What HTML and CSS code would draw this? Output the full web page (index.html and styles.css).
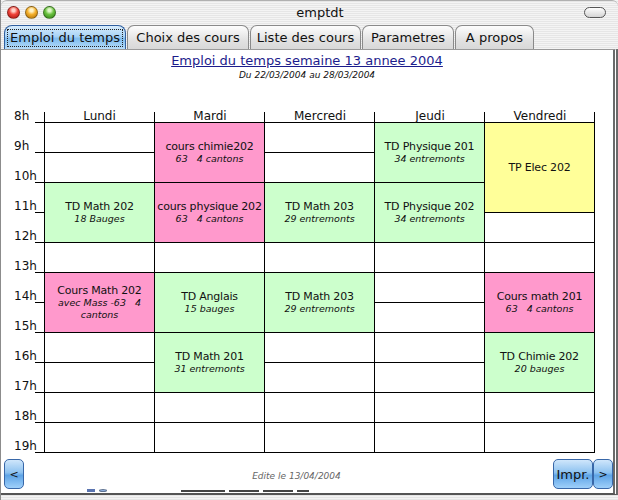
FILE: index.html
```html
<!DOCTYPE html>
<html lang="fr">
<head>
<meta charset="utf-8">
<title>emptdt</title>
<link rel="stylesheet" href="styles.css">
</head>
<body>
<div class="window">
  <div class="titlebar">
    <div class="lights">
      <span class="light red"></span>
      <span class="light yellow"></span>
      <span class="light green"></span>
    </div>
    <div class="wintitle">emptdt</div>
    <span class="pill"></span>
  </div>
  <div class="tabs">
    <div class="tab active t1"><span class="focus">Emploi du temps</span></div>
    <div class="tab t2">Choix des cours</div>
    <div class="tab t3">Liste des cours</div>
    <div class="tab t4">Parametres</div>
    <div class="tab t5">A propos</div>
  </div>
  <div class="panel">
    <div class="heading">
      <a class="title" href="#">Emploi du temps semaine 13 annee 2004</a>
      <div class="subtitle">Du 22/03/2004 au 28/03/2004</div>
    </div>
    <div class="schedule">
      <!-- header row -->
      <div class="hour" style="grid-row:1">8h</div>
      <div class="day first" style="grid-column:2">Lundi</div>
      <div class="day" style="grid-column:3">Mardi</div>
      <div class="day" style="grid-column:4">Mercredi</div>
      <div class="day" style="grid-column:5">Jeudi</div>
      <div class="day" style="grid-column:6">Vendredi</div>

      <!-- hour labels -->
      <div class="hour" style="grid-row:2">9h</div>
      <div class="hour" style="grid-row:3">10h</div>
      <div class="hour" style="grid-row:4">11h</div>
      <div class="hour" style="grid-row:5">12h</div>
      <div class="hour" style="grid-row:6">13h</div>
      <div class="hour" style="grid-row:7">14h</div>
      <div class="hour" style="grid-row:8">15h</div>
      <div class="hour" style="grid-row:9">16h</div>
      <div class="hour" style="grid-row:10">17h</div>
      <div class="hour" style="grid-row:11">18h</div>
      <div class="hour" style="grid-row:12">19h</div>

      <!-- Lundi -->
      <div class="cell first" style="grid-column:2;grid-row:2"></div>
      <div class="cell first" style="grid-column:2;grid-row:3"></div>
      <div class="cell first green" style="grid-column:2;grid-row:4 / span 2"><b>TD Math 202</b><i>18 Bauges</i></div>
      <div class="cell first" style="grid-column:2;grid-row:6"></div>
      <div class="cell first pink" style="grid-column:2;grid-row:7 / span 2"><b>Cours Math 202</b><i>avec Mass -63   4 cantons</i></div>
      <div class="cell first" style="grid-column:2;grid-row:9"></div>
      <div class="cell first" style="grid-column:2;grid-row:10"></div>
      <div class="cell first" style="grid-column:2;grid-row:11"></div>
      <div class="cell first" style="grid-column:2;grid-row:12"></div>

      <!-- Mardi -->
      <div class="cell pink" style="grid-column:3;grid-row:2 / span 2"><b>cours chimie202</b><i>63   4 cantons</i></div>
      <div class="cell pink" style="grid-column:3;grid-row:4 / span 2"><b>cours physique 202</b><i>63   4 cantons</i></div>
      <div class="cell" style="grid-column:3;grid-row:6"></div>
      <div class="cell green" style="grid-column:3;grid-row:7 / span 2"><b>TD Anglais</b><i>15 bauges</i></div>
      <div class="cell green" style="grid-column:3;grid-row:9 / span 2"><b>TD Math 201</b><i>31 entremonts</i></div>
      <div class="cell" style="grid-column:3;grid-row:11"></div>
      <div class="cell" style="grid-column:3;grid-row:12"></div>

      <!-- Mercredi -->
      <div class="cell" style="grid-column:4;grid-row:2"></div>
      <div class="cell" style="grid-column:4;grid-row:3"></div>
      <div class="cell green" style="grid-column:4;grid-row:4 / span 2"><b>TD Math 203</b><i>29 entremonts</i></div>
      <div class="cell" style="grid-column:4;grid-row:6"></div>
      <div class="cell green" style="grid-column:4;grid-row:7 / span 2"><b>TD Math 203</b><i>29 entremonts</i></div>
      <div class="cell" style="grid-column:4;grid-row:9"></div>
      <div class="cell" style="grid-column:4;grid-row:10"></div>
      <div class="cell" style="grid-column:4;grid-row:11"></div>
      <div class="cell" style="grid-column:4;grid-row:12"></div>

      <!-- Jeudi -->
      <div class="cell green" style="grid-column:5;grid-row:2 / span 2"><b>TD Physique 201</b><i>34 entremonts</i></div>
      <div class="cell green" style="grid-column:5;grid-row:4 / span 2"><b>TD Physique 202</b><i>34 entremonts</i></div>
      <div class="cell" style="grid-column:5;grid-row:6"></div>
      <div class="cell" style="grid-column:5;grid-row:7"></div>
      <div class="cell" style="grid-column:5;grid-row:8"></div>
      <div class="cell" style="grid-column:5;grid-row:9"></div>
      <div class="cell" style="grid-column:5;grid-row:10"></div>
      <div class="cell" style="grid-column:5;grid-row:11"></div>
      <div class="cell" style="grid-column:5;grid-row:12"></div>

      <!-- Vendredi -->
      <div class="cell yellow" style="grid-column:6;grid-row:2 / span 3"><b>TP Elec 202</b></div>
      <div class="cell" style="grid-column:6;grid-row:5"></div>
      <div class="cell" style="grid-column:6;grid-row:6"></div>
      <div class="cell pink" style="grid-column:6;grid-row:7 / span 2"><b>Cours math 201</b><i>63   4 cantons</i></div>
      <div class="cell green" style="grid-column:6;grid-row:9 / span 2"><b>TD Chimie 202</b><i>20 bauges</i></div>
      <div class="cell" style="grid-column:6;grid-row:11"></div>
      <div class="cell" style="grid-column:6;grid-row:12"></div>
    </div>
    <div class="footer">
      <button class="aqua nav">&lt;</button>
      <div class="edited">Edite le 13/04/2004</div>
      <div class="right-buttons">
        <button class="aqua print">Impr.</button>
        <button class="aqua nav">&gt;</button>
      </div>
    </div>
  </div>
  <div class="bottom-strip">
    <div class="ghost">
      <span class="sq"></span><span class="sq light"></span>
      <span class="smudge wide"></span><span class="smudge"></span><span class="smudge"></span><span class="smudge short"></span>
    </div>
  </div>
</div>
</body>
</html>
```
FILE: styles.css
```css
* { box-sizing: border-box; }

html, body {
  margin: 0;
  padding: 0;
  width: 618px;
  height: 500px;
  overflow: hidden;
  background: #fff;
  font-family: "DejaVu Sans", "Liberation Sans", sans-serif;
  color: #000;
}

.window {
  width: 618px;
  height: 500px;
  display: flex;
  flex-direction: column;
  background: repeating-linear-gradient(#f4f4f4 0 1px, #e6e6e6 1px 2px);
  border-left: 1px solid #8c8c8c;
}

/* title bar */
.titlebar {
  height: 24px;
  flex: none;
  display: flex;
  align-items: center;
  padding: 0 12px 0 6px;
  border-top: 1px solid #b0b0b0;
  border-radius: 6px 6px 0 0;
}
.lights { display: flex; gap: 5px; }
.light {
  width: 13px;
  height: 13px;
  border-radius: 50%;
  border: 1px solid rgba(0,0,0,0.35);
}
.light.red { background: radial-gradient(circle at 50% 30%, #ffd1c8 0 15%, #f0443a 45%, #a3100c 100%); }
.light.yellow { background: radial-gradient(circle at 50% 30%, #fff3c8 0 15%, #f5b02b 45%, #a86a05 100%); }
.light.green { background: radial-gradient(circle at 50% 30%, #dff7c8 0 15%, #6ac23f 45%, #2d7a12 100%); }
.wintitle {
  flex: 1;
  text-align: center;
  font-size: 13px;
  color: #111;
}
.pill {
  width: 22px;
  height: 11px;
  border-radius: 6px;
  border: 1px solid #555;
  background: linear-gradient(#fdfdfd, #d4d4d4);
}

/* tabs */
.tabs {
  height: 25px;
  flex: none;
  display: flex;
  align-items: flex-end;
  padding-left: 3px;
  gap: 1px;
}
.tab {
  height: 24px;
  display: flex;
  align-items: center;
  justify-content: center;
  font-size: 13px;
  color: #111;
  border: 1px solid #8a8a8a;
  border-bottom: none;
  border-radius: 7px 7px 0 0;
  background: linear-gradient(#fdfdfd, #e2e2e2 60%, #d8d8d8);
}
.tab.active {
  border-color: #2f5e9e;
  background: linear-gradient(#d7ecfc 0%, #a8d3f6 45%, #7fbcee 55%, #b6dcfa 100%);
  border-radius: 8px 8px 0 0;
}
.focus {
  border: 1px dotted #222;
  padding: 0 2px;
  line-height: 16px;
}
.t1 { width: 122px; }
.t2 { width: 122px; }
.t3 { width: 111px; }
.t4 { width: 92px; }
.t5 { width: 79px; }

/* panel */
.panel {
  height: 440px;
  flex: none;
  background: #fff;
  border-right: 5px double #6a6a6a;
  border-top: 1px solid #9a9a9a;
  display: flex;
  flex-direction: column;
  padding-top: 2px;
}
.heading {
  display: flex;
  flex-direction: column;
  align-items: center;
}
.title {
  font-size: 13px;
  line-height: 17px;
  color: #1c1c8c;
  text-decoration: underline;
}
.subtitle {
  font-size: 9px;
  line-height: 12px;
  font-style: italic;
  color: #111;
}

/* schedule grid */
.schedule {
  margin-top: 27px;
  margin-left: -1px;
  display: grid;
  grid-template-columns: 44px 111px 110px 110px 110px 110px;
  grid-template-rows: 15px repeat(11, 30px);
}
.hour {
  grid-column: 1;
  display: flex;
  align-items: flex-end;
  padding-left: 14px;
  padding-bottom: 1px;
  font-size: 12px;
  line-height: 12px;
  color: #111;
  background: linear-gradient(#000, #000) right bottom / 9px 1px no-repeat;
}
.day {
  grid-row: 1;
  display: flex;
  align-items: flex-end;
  justify-content: center;
  font-size: 12px;
  line-height: 12px;
  color: #111;
  border-bottom: 1px solid #000;
  background: linear-gradient(#000, #000) right bottom / 1px 10px no-repeat;
}
.day.first {
  background:
    linear-gradient(#000, #000) right bottom / 1px 10px no-repeat,
    linear-gradient(#000, #000) left bottom / 1px 10px no-repeat;
}
.cell {
  border-right: 1px solid #000;
  border-bottom: 1px solid #000;
  display: flex;
  flex-direction: column;
  align-items: center;
  justify-content: center;
  text-align: center;
  padding: 0;
  color: #111;
  min-width: 0;
}
.cell.first { border-left: 1px solid #000; }
.cell b {
  font-weight: normal;
  font-size: 11px;
  line-height: 13px;
  letter-spacing: -0.2px;
  white-space: nowrap;
}
.cell i {
  font-size: 9.5px;
  line-height: 12px;
  white-space: pre-wrap;
  padding: 0 10px;
}
.pink { background: #ff99cc; }
.green { background: #ccffcc; }
.yellow { background: #ffff99; }

/* footer */
.footer {
  margin-top: 6px;
  display: flex;
  align-items: center;
  justify-content: space-between;
  padding: 0 0 0 3px;
}
.right-buttons { display: flex; }
.aqua {
  height: 30px;
  font-family: "DejaVu Sans", sans-serif;
  font-size: 13px;
  color: #111;
  border: 1px solid #3867a8;
  border-radius: 5px;
  background: linear-gradient(#cfe6fb 0%, #8dc2f0 45%, #5ea4e6 55%, #9fd0fa 100%);
  padding: 0;
  margin: 0;
}
.aqua.nav { width: 20px; font-size: 11px; }
.aqua.print { width: 40px; }
.edited {
  font-size: 9px;
  line-height: 12px;
  font-style: italic;
  color: #666;
  padding-top: 4px;
  padding-left: 16px;
}

/* bottom strip */
.bottom-strip {
  flex: 1;
  background: #fff;
  border-bottom: 2px solid #555;
  border-right: 5px double #6a6a6a;
  overflow: hidden;
  margin-bottom: 5px;
}
.ghost {
  display: flex;
  align-items: flex-end;
  height: 3px;
  padding-left: 86px;
  gap: 4px;
}
.sq { width: 8px; height: 3px; background: #5a74b0; flex: none; }
.sq.light { background: #8fb0e0; }
.smudge { width: 30px; height: 2px; background: #444; flex: none; }
.smudge.wide { width: 44px; margin-left: 70px; }
.smudge.short { width: 12px; }
```
